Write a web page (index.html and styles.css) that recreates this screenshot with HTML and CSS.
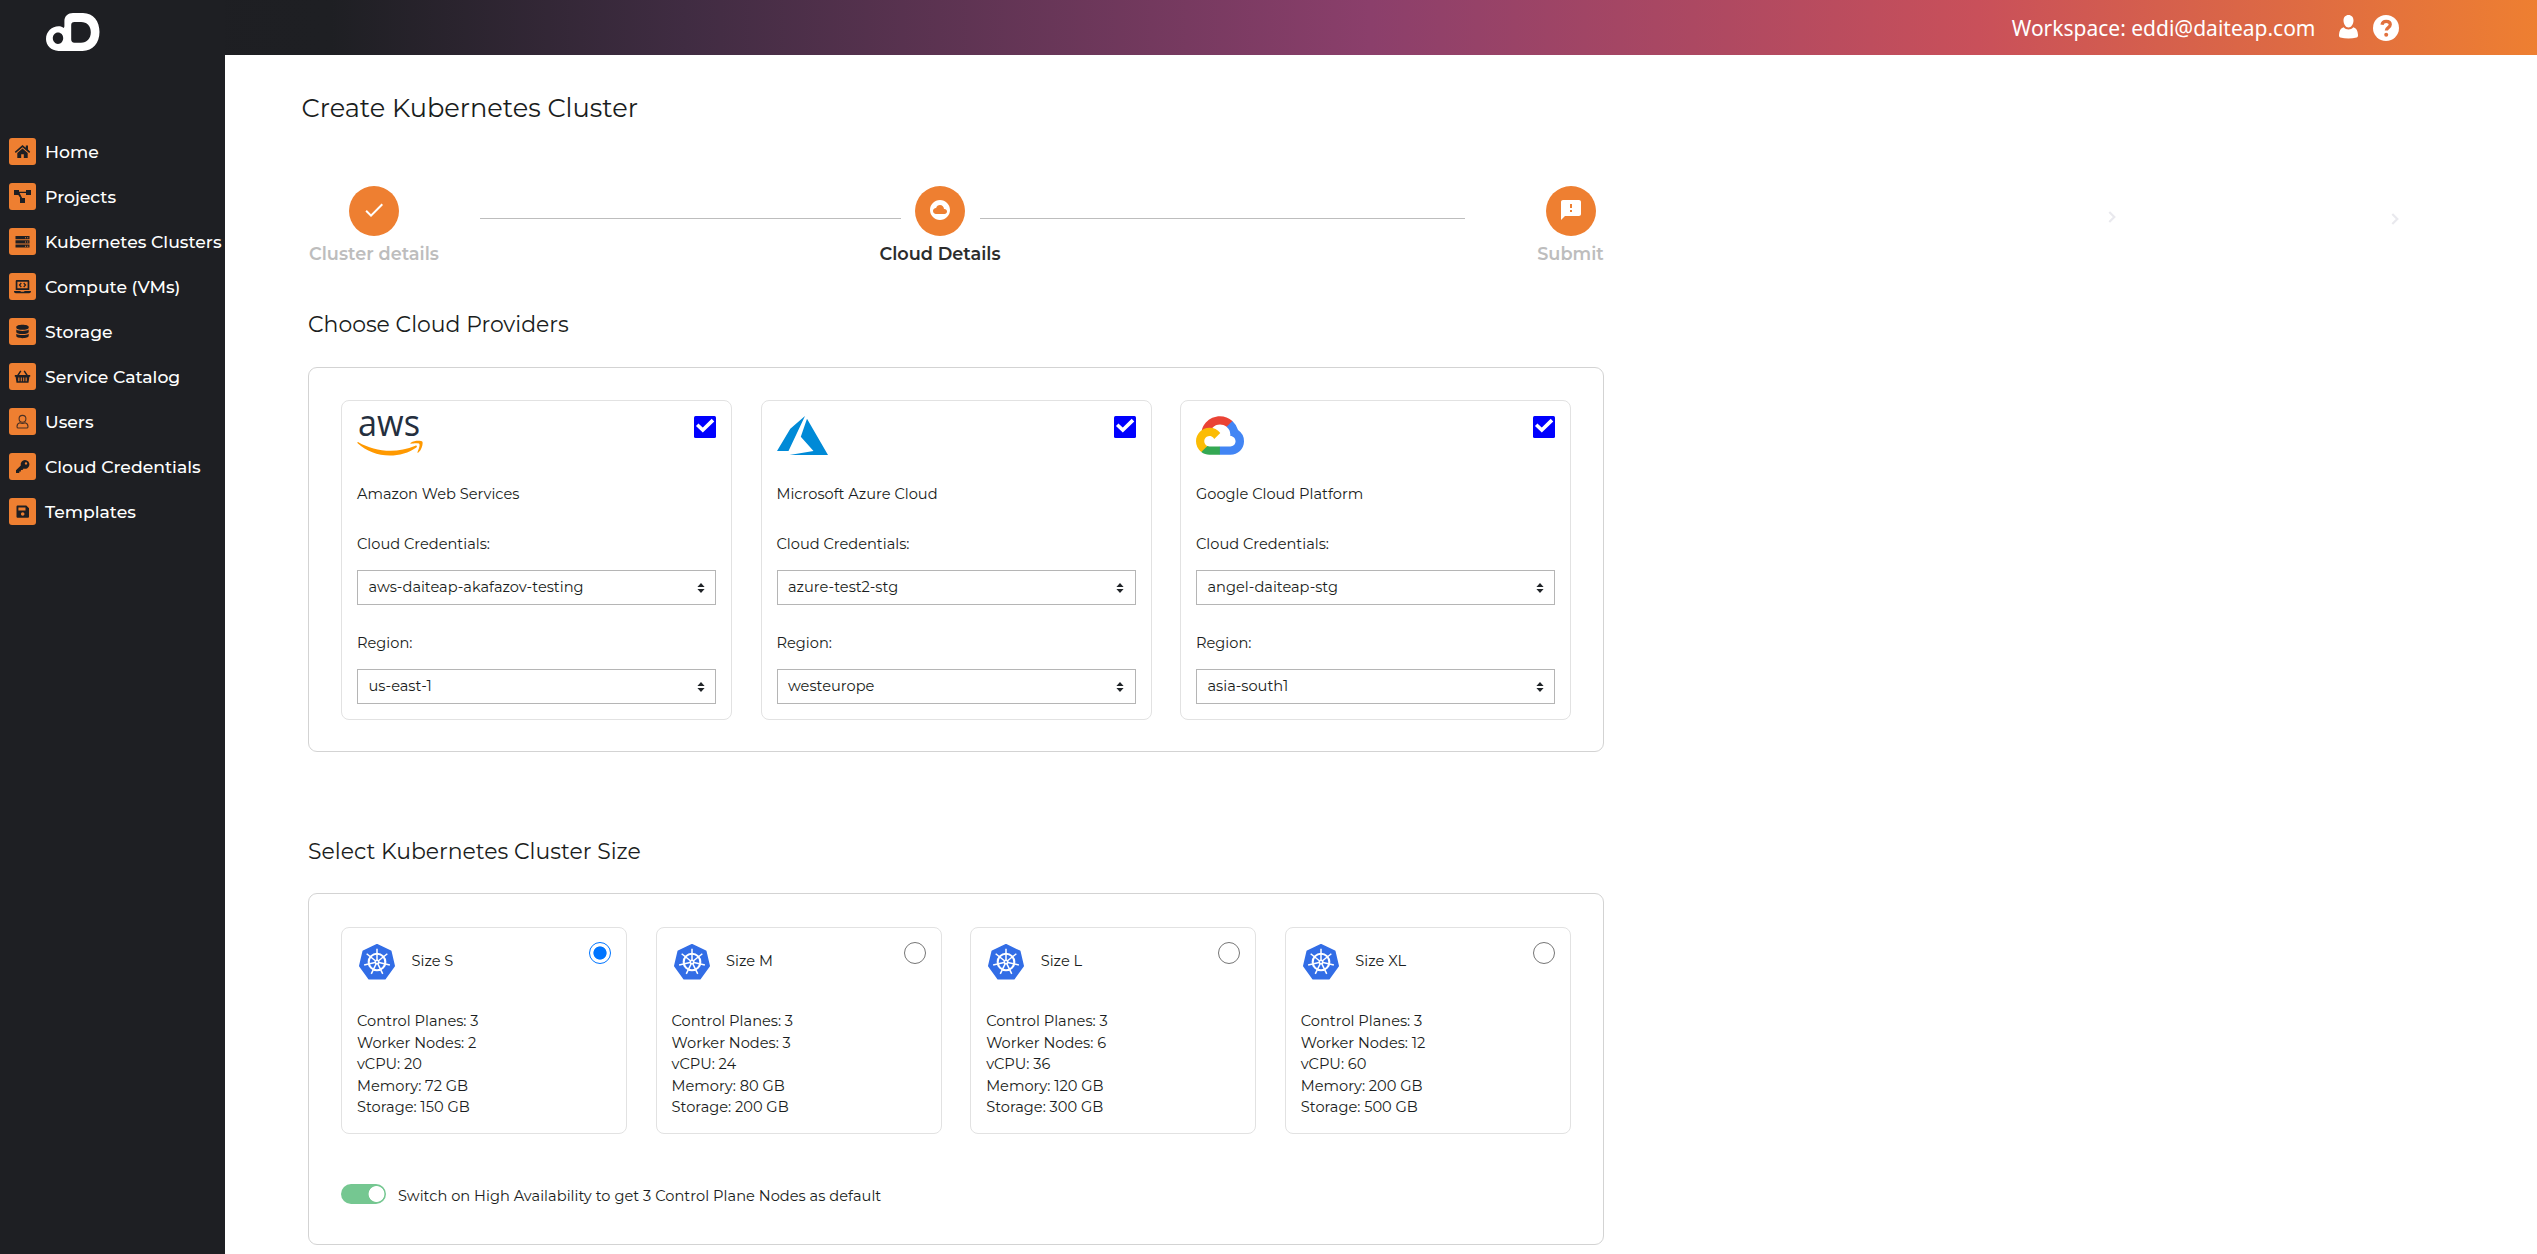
FILE: index.html
```html
<!DOCTYPE html>
<html lang="en">
<head>
<meta charset="utf-8">
<title>Create Kubernetes Cluster</title>
<link rel="stylesheet" href="styles.css">
</head>
<body>
<svg class="defs" width="0" height="0" aria-hidden="true">
  <symbol id="check" viewBox="0 0 22 22">
    <rect width="22" height="22" rx="1.5" fill="#0000fe"/>
    <path d="M4.500 10l4.300 4.100 8.900-8.700" fill="none" stroke="#fff" stroke-width="3.600" stroke-linecap="square"/>
  </symbol>
  <symbol id="sort" viewBox="0 0 8 10">
    <path d="M4 0l3.600 4H.4zM4 10l3.600-4H.4z" fill="#212529"/>
  </symbol>
  <symbol id="k8s" viewBox="-18 -18 36 36">
    <path d="M0-17L13.600-10.500 17 4 7.800 16.600H-7.800L-17 4-13.600-10.500z" fill="#326de6" stroke="#326de6" stroke-width="2" stroke-linejoin="round"/>
    <g fill="none" stroke="#fff">
      <circle r="8.300" stroke-width="2.100"/>
      <g stroke-width="1.500">
        <path d="M0-2V-13.200"/>
        <path d="M0-2V-13.200" transform="rotate(51.43)"/>
        <path d="M0-2V-13.200" transform="rotate(102.86)"/>
        <path d="M0-2V-13.200" transform="rotate(154.29)"/>
        <path d="M0-2V-13.200" transform="rotate(205.71)"/>
        <path d="M0-2V-13.200" transform="rotate(257.14)"/>
        <path d="M0-2V-13.200" transform="rotate(308.57)"/>
      </g>
    </g>
    <circle r="2.500" fill="#fff"/><circle r=".9" fill="#326de6"/>
  </symbol>
  <symbol id="chevron" viewBox="0 0 8 12">
    <path d="M1.300 1L6.300 6l-5 5" fill="none" stroke="#e9e9ee" stroke-width="2.200"/>
  </symbol>
</svg>

<header class="topbar">
  <span class="workspace">Workspace: eddi@daiteap.com</span>
  <svg class="user" width="19" height="24" viewBox="0 0 19 24" fill="#fff"><path d="M9.5 0c3 0 5 2.200 5 5.600 0 3.600-2.200 7-5 7s-5-3.400-5-7C4.500 2.200 6.500 0 9.500 0zM4.600 12.200c1.400 1.500 3 2.200 4.900 2.200s3.500-.7 4.900-2.200c3 .8 4.300 3.200 4.600 7.600.1 1.600-.2 2.300-1.300 2.600-2.600.7-5.400 1-8.200 1s-5.600-.3-8.200-1C.2 22.100-.1 21.400 0 19.800c.3-4.400 1.600-6.800 4.600-7.600z"/></svg>
  <svg class="help" width="26" height="26" viewBox="0 0 26 26"><circle cx="13" cy="13" r="13" fill="#fff"/><path d="M9 9.800C9.300 7.600 10.900 6.300 13.200 6.300c2.400 0 4.100 1.300 4.100 3.300 0 3.200-4 2.900-4 6" fill="none" stroke="#e2713d" stroke-width="3.200"/><circle cx="13.200" cy="19.800" r="2" fill="#e2713d"/></svg>
</header>

<nav class="sidebar">
  <svg class="brand" width="54" height="39" viewBox="0 0 54 39"><path fill="#fff" fill-rule="evenodd" d="M12.500 38C5 37.500 0 32.500 0 26 0 18.500 6 13.300 12.500 13.300c2.200 0 4 .6 5 1.600.8-.5.9-1.200.9-2.400V8C18.400 3 22 0 27 0h10C47.500 0 53.500 8.500 53.500 19S47 38 36.500 38zM12 19.500c-3 0-5.200 2.500-5.200 5.600S9 31 12 31s5.200-2.600 5.200-5.900-2.200-5.600-5.200-5.600zM28.500 9c-2.300 0-3.300 1-3.300 3.300v14c0 2.400 1 3.400 3.300 3.400H35c6 0 9.800-4.200 9.800-10.400C44.800 13 41 9 35 9z"/></svg>
  <ul>
    <li><svg viewBox="0 0 27 27"><path d="M13.500 7L5.800 13.700l1 1.200 6.700-5.700 6.700 5.700 1-1.200L19 11.600V7.500h-2.200v2.200z"/><path d="M13.500 10.500L8.300 15v5h3.900v-3.700h2.600V20h3.900v-5z"/></svg>Home</li>
    <li><svg viewBox="0 0 27 27"><path d="M5 7h5v1.800h7V7h5v5h-5v-2h-6.400l2.500 5H16v5h-5v-5h.4L9.300 12H5z"/></svg>Projects</li>
    <li><svg viewBox="0 0 27 27"><path d="M6.500 8h14v3.200h-14zM6.500 12.300h14v3.200h-14zM6.500 16.600h14v3h-14z"/><path d="M16 9.300h1v1h-1zM18.200 9.300h1v1h-1zM16 13.500h1v1h-1zM18.200 13.500h1v1h-1zM16 17.700h1v1h-1zM18.200 17.700h1v1h-1z" fill="#ee7f31"/></svg>Kubernetes Clusters</li>
    <li><svg viewBox="0 0 27 27"><path fill-rule="evenodd" d="M8 7h11c.8 0 1.300.5 1.300 1.300V17H6.700V8.300C6.700 7.500 7.200 7 8 7zm.4 1.700v6.600h10.200V8.700zM5 18h6.500c0 .6.400.8.800.8h2.400c.5 0 .8-.2.800-.8H22c0 1.500-.8 2.200-1.800 2.200H6.800C5.800 20.200 5 19.500 5 18z"/><path d="M12.300 10L10.500 12l1.800 2M14.700 10l1.800 2-1.800 2" fill="none" stroke="#1e1f23" stroke-width="1.200"/></svg>Compute (VMs)</li>
    <li><svg viewBox="0 0 27 27"><path d="M7.300 8.800c0-1.200 2.700-2.100 6.200-2.100s6.200.9 6.200 2.100v.9c0 1.200-2.700 2.100-6.200 2.100s-6.200-.9-6.200-2.100zM7.300 11.500c1.300 1 3.700 1.400 6.200 1.400s4.900-.4 6.200-1.400v2.400c0 1.200-2.700 2.100-6.200 2.100s-6.200-.9-6.200-2.100zM7.300 15.700c1.300 1 3.700 1.400 6.200 1.400s4.900-.4 6.200-1.400v2.400c0 1.200-2.700 2.100-6.200 2.100s-6.200-.9-6.200-2.100z"/></svg>Storage</li>
    <li><svg viewBox="0 0 27 27"><path fill-rule="evenodd" d="M5.800 12h2.400l3-4.600 1.200.8L10 12h7l-2.400-3.800 1.200-.8 3 4.600h2.400v1.700h-.8l-.9 6H7.500l-.9-6h-.8zM9.300 14.500v3.700h1.100v-3.700zm2.500 0v3.700h1v-3.700zm2.400 0v3.700h1v-3.700zm2.400 0v3.700h1.100v-3.700z"/></svg>Service Catalog</li>
    <li><svg viewBox="0 0 27 27"><g fill="none" stroke="#4b3124" stroke-width="1.100"><circle cx="13.500" cy="10.800" r="3.400"/><path d="M10.700 14.800c-1.900.6-2.700 1.900-2.700 3.900 0 .9.500 1.300 1.300 1.300h8.400c.8 0 1.300-.4 1.300-1.300 0-2-.8-3.300-2.700-3.900-.9.500-1.800.7-2.800.7s-1.900-.2-2.800-.7z"/></g></svg>Users</li>
    <li><svg viewBox="0 0 27 27"><path fill-rule="evenodd" d="M16 7a4.400 4.400 0 1 1-1.300 8.600L13.500 16.900h-1.600v1.600h-1.600v1.500H7v-2.800l4.800-4.700A4.400 4.400 0 0 1 16 7zm1 2.200a1.200 1.200 0 1 0 0 2.400 1.200 1.200 0 0 0 0-2.400z"/></svg>Cloud Credentials</li>
    <li><svg viewBox="0 0 27 27"><path fill-rule="evenodd" d="M8.800 7.500h8.500L20 10.200v8.200c0 .8-.5 1.300-1.300 1.300H8.800c-.8 0-1.300-.5-1.300-1.300V8.800c0-.8.500-1.300 1.300-1.300zm.6 1.900v3h7.100v-3zM13.700 14.200a1.800 1.800 0 1 0 0 3.600 1.800 1.800 0 0 0 0-3.600z"/></svg>Templates</li>
  </ul>
</nav>

<main>
  <h1>Create Kubernetes Cluster</h1>

  <div class="stepper">
    <div class="step first"><span class="dot"><svg viewBox="0 0 24 24"><path d="M9 16.170L4.830 12l-1.420 1.410L9 19 21 7l-1.410-1.410z"/></svg></span><span class="label">Cluster details</span></div>
    <div class="line one"></div>
    <div class="step second active"><span class="dot"><svg viewBox="0 0 24 24"><path d="M12 2C6.480 2 2 6.480 2 12s4.480 10 10 10 10-4.480 10-10S17.520 2 12 2zm4.500 14H8c-1.660 0-3-1.340-3-3s1.340-3 3-3l.14.010C8.580 8.280 10.130 7 12 7c2.210 0 4 1.790 4 4h.5c1.380 0 2.500 1.120 2.500 2.500S17.880 16 16.500 16z"/></svg></span><span class="label">Cloud Details</span></div>
    <div class="line two"></div>
    <div class="step third"><span class="dot"><svg viewBox="0 0 24 24"><path d="M20 2H4c-1.100 0-1.990.9-1.990 2L2 22l4-4h14c1.100 0 2-.9 2-2V4c0-1.100-.9-2-2-2zm-7 12h-2v-2h2v2zm0-4h-2V6h2v4z"/></svg></span><span class="label">Submit</span></div>
    <svg class="chev near" width="8" height="12"><use href="#chevron"/></svg>
    <svg class="chev far" width="8" height="12"><use href="#chevron"/></svg>
  </div>

  <h2>Choose Cloud Providers</h2>
  <section class="panel providers">
    <article class="card">
      <div class="card-head">
        <svg width="66" height="40" viewBox="0 0 66 40"><text class="aws" x="1" y="20" textLength="62" lengthAdjust="spacingAndGlyphs">aws</text><g fill="#f90" transform="translate(0 .2) scale(.2171)"><path d="M273.500 143.700c-32.900 24.300-80.700 37.200-121.800 37.200-57.600 0-109.500-21.300-148.700-56.700-3.100-2.800-.3-6.600 3.400-4.400 42.400 24.600 94.700 39.500 148.800 39.500 36.500 0 76.600-7.600 113.500-23.200 5.500-2.500 10.200 3.600 4.800 7.600z"/><path d="M287.200 128.100c-4.200-5.400-27.800-2.600-38.500-1.300-3.200.4-3.700-2.400-.8-4.500 18.800-13.200 49.700-9.400 53.300-5 3.600 4.500-1 35.400-18.600 50.200-2.700 2.300-5.300 1.100-4.100-1.900 4-9.900 12.900-32.200 8.700-37.500z"/></g></svg>
        <svg width="22" height="22"><use href="#check"/></svg>
      </div>
      <p class="name">Amazon Web Services</p>
      <p class="field">Cloud Credentials:</p>
      <div class="select">aws-daiteap-akafazov-testing<svg width="8" height="10"><use href="#sort"/></svg></div>
      <p class="field region">Region:</p>
      <div class="select">us-east-1<svg width="8" height="10"><use href="#sort"/></svg></div>
    </article>
    <article class="card">
      <div class="card-head">
        <svg width="52" height="40" viewBox="0 0 52 40" fill="#008ad7"><path d="M28 0L13.300 12.700 0 35h11.500zM30 2.700L51 39H12.500L36.500 35 23.800 20.700z"/></svg>
        <svg width="22" height="22"><use href="#check"/></svg>
      </div>
      <p class="name">Microsoft Azure Cloud</p>
      <p class="field">Cloud Credentials:</p>
      <div class="select">azure-test2-stg<svg width="8" height="10"><use href="#sort"/></svg></div>
      <p class="field region">Region:</p>
      <div class="select">westeurope<svg width="8" height="10"><use href="#sort"/></svg></div>
    </article>
    <article class="card">
      <div class="card-head">
        <svg width="48" height="39" viewBox="0 0 256 206"><path fill="#ea4335" d="M170.252 56.819l22.253-22.253 1.483-9.370C153.437-11.677 88.976-7.496 52.420 33.920 42.267 45.423 34.734 59.764 30.717 74.573l7.970-1.123 44.505-7.340 3.436-3.513c19.797-21.742 53.270-24.667 76.128-6.168z"/><path fill="#4285f4" d="M224.205 73.918a100.249 100.249 0 0 0-30.217-48.722l-31.232 31.232a55.515 55.515 0 0 1 20.379 44.037v5.544c15.350 0 27.797 12.446 27.797 27.796 0 15.352-12.446 27.573-27.797 27.573h-55.671l-5.466 5.934v33.340l5.466 5.231h55.670c39.930.311 72.553-31.494 72.864-71.424a72.303 72.303 0 0 0-31.793-60.541"/><path fill="#34a853" d="M71.870 205.796h55.593V161.290H71.870a27.275 27.275 0 0 1-11.400-2.498l-7.887 2.420-22.409 22.253-1.952 7.574c12.567 9.489 27.900 14.825 43.647 14.757"/><path fill="#fbbc05" d="M71.870 61.425C31.940 61.664-.237 94.228.001 134.158a72.301 72.301 0 0 0 28.222 56.880l32.248-32.246c-13.990-6.322-20.208-22.786-13.887-36.776 6.320-13.990 22.786-20.208 36.775-13.888a27.796 27.796 0 0 1 13.887 13.888l32.248-32.248A72.224 72.224 0 0 0 71.870 61.425"/></svg>
        <svg width="22" height="22"><use href="#check"/></svg>
      </div>
      <p class="name">Google Cloud Platform</p>
      <p class="field">Cloud Credentials:</p>
      <div class="select">angel-daiteap-stg<svg width="8" height="10"><use href="#sort"/></svg></div>
      <p class="field region">Region:</p>
      <div class="select">asia-south1<svg width="8" height="10"><use href="#sort"/></svg></div>
    </article>
  </section>

  <h2>Select Kubernetes Cluster Size</h2>
  <section class="panel sizes">
    <div class="size-row">
      <article class="card">
        <div class="size-head"><svg width="36" height="36"><use href="#k8s"/></svg><span>Size S</span><i class="radio on"></i></div>
        <ul><li>Control Planes: 3</li><li>Worker Nodes: 2</li><li>vCPU: 20</li><li>Memory: 72 GB</li><li>Storage: 150 GB</li></ul>
      </article>
      <article class="card">
        <div class="size-head"><svg width="36" height="36"><use href="#k8s"/></svg><span>Size M</span><i class="radio"></i></div>
        <ul><li>Control Planes: 3</li><li>Worker Nodes: 3</li><li>vCPU: 24</li><li>Memory: 80 GB</li><li>Storage: 200 GB</li></ul>
      </article>
      <article class="card">
        <div class="size-head"><svg width="36" height="36"><use href="#k8s"/></svg><span>Size L</span><i class="radio"></i></div>
        <ul><li>Control Planes: 3</li><li>Worker Nodes: 6</li><li>vCPU: 36</li><li>Memory: 120 GB</li><li>Storage: 300 GB</li></ul>
      </article>
      <article class="card">
        <div class="size-head"><svg width="36" height="36"><use href="#k8s"/></svg><span>Size XL</span><i class="radio"></i></div>
        <ul><li>Control Planes: 3</li><li>Worker Nodes: 12</li><li>vCPU: 60</li><li>Memory: 200 GB</li><li>Storage: 500 GB</li></ul>
      </article>
    </div>
    <div class="ha"><span class="switch"></span><span>Switch on High Availability to get 3 Control Plane Nodes as default</span></div>
  </section>
</main>
</body>
</html>
```
FILE: styles.css
```css
* { box-sizing: border-box; margin: 0; padding: 0; }

html, body { height: 100%; }

body {
  display: grid;
  grid-template-columns: 225px 1fr;
  grid-template-rows: 55px 1fr;
  background: #fff;
  color: #1a1d20;
  font: 400 14.600px/21.600px Montserrat, Inter, sans-serif;
}

ul { list-style: none; }
svg { display: block; flex: none; }
.defs { position: absolute; }

/* Top bar */
.topbar {
  grid-column: 1 / 3;
  grid-row: 1;
  display: flex;
  align-items: flex-start;
  justify-content: flex-end;
  padding: 0 138px 0 0;
  background: linear-gradient(90deg, #1d1e22 0%, #1e1f23 13%, #402c42 27%, #8b3f6b 54%, #c9505a 78%, #ee7f31 100%);
  color: #fff;
}
.workspace { font: 400 21px/28px "Noto Sans", "Open Sans", sans-serif; padding-top: 14px; }
.user { margin: 15px 0 0 23.500px; }
.help { margin: 15px 0 0 15px; }

/* Sidebar */
.sidebar {
  grid-column: 1;
  grid-row: 1 / 3;
  background: #1e1f23;
  padding: 13px 0 0 9px;
}
.brand { margin-left: 36.500px; }
.sidebar ul { margin-top: 86px; display: grid; gap: 18px; }
.sidebar li {
  display: flex;
  gap: 9px;
  color: #fff;
  font-size: 17.250px;
  font-weight: 500;
  line-height: 27px;
  white-space: nowrap;
}
.sidebar li svg { width: 27px; height: 27px; border-radius: 3px; background: #ee7f31; fill: #1e1f23; }

/* Content */
main { grid-column: 2; grid-row: 2; padding: 37px 0 0 83px; min-width: 0; }
h1 { margin-left: -6.500px; font-size: 25.650px; font-weight: 400; line-height: 31px; }
h2 { font-size: 21.950px; font-weight: 400; line-height: 26px; }

.stepper { display: flex; margin-top: 63px; height: 78px; }
.step { display: flex; flex-direction: column; align-items: center; color: #bdbdbd; }
.step.first { width: 132px; }
.step.second { width: 78px; }
.step.third { width: 67px; margin-left: 72px; }
.step .label { margin-top: 7px; font-size: 17.700px; font-weight: 600; line-height: 22px; white-space: nowrap; }
.step.active .label { color: #2c2c2c; }
.dot {
  display: grid;
  place-items: center;
  width: 50px;
  height: 50px;
  border-radius: 50%;
  background: #ee7f31;
  flex: none;
}
.dot svg { width: 24px; height: 24px; fill: #fff; margin-top: -2px; }
.line { height: 1px; margin-top: 32px; background: #bdbdbd; }
.line.one { width: 421px; margin-left: 40px; }
.line.two { width: 485px; margin-left: 1px; }
.chev.near { margin: 25px 0 0 504px; }
.chev.far { margin: 27px 0 0 275px; }

.stepper + h2 { margin-top: 48px; }

.panel { width: 1296px; padding: 32px; border: 1px solid #d3d3d3; border-radius: 9px; }
.providers { height: 385px; margin-top: 29px; display: grid; grid-template-columns: repeat(3, 391px); gap: 28.500px; }
.providers + h2 { margin-top: 87px; }
.card { border: 1px solid #e2e2e2; border-radius: 8px; padding: 15px; }
.card-head { display: flex; justify-content: space-between; align-items: flex-start; height: 67px; }
.aws { font: 500 37px "Open Sans", sans-serif; fill: #252f3e; }
.name, .field { line-height: 22px; }
.field { margin-top: 28px; }
.select {
  display: flex;
  align-items: center;
  justify-content: space-between;
  height: 35px;
  margin-top: 15px;
  padding: 0 10.500px;
  border: 1px solid #b5b5b5;
}
.field.region { margin-top: 27px; }

.sizes { height: 352px; margin-top: 28px; padding-top: 33px; }
.size-row { display: grid; grid-template-columns: repeat(4, 286px); gap: 28.600px; }
.size-row .card { height: 207px; padding: 14px 15px; }
.size-head { display: flex; align-items: flex-start; height: 69px; }
.size-head svg { margin: 2px 0 0 2px; }
.size-head span { margin: 9px auto 0 16.500px; }
.radio { width: 22px; height: 22px; border: 1px solid #767676; border-radius: 50%; }
.radio.on { border-color: #0075ff; background: radial-gradient(circle, #0075ff 6.200px, #fff 7px); }
.ha { display: flex; gap: 12px; margin-top: 50px; letter-spacing: .035px; }
.switch { width: 45px; height: 20px; border-radius: 10px; background: radial-gradient(circle at 35.500px 10px, #fff 7.500px, #75c791 8.300px); }
.ha span + span { padding-top: 2px; }
```
